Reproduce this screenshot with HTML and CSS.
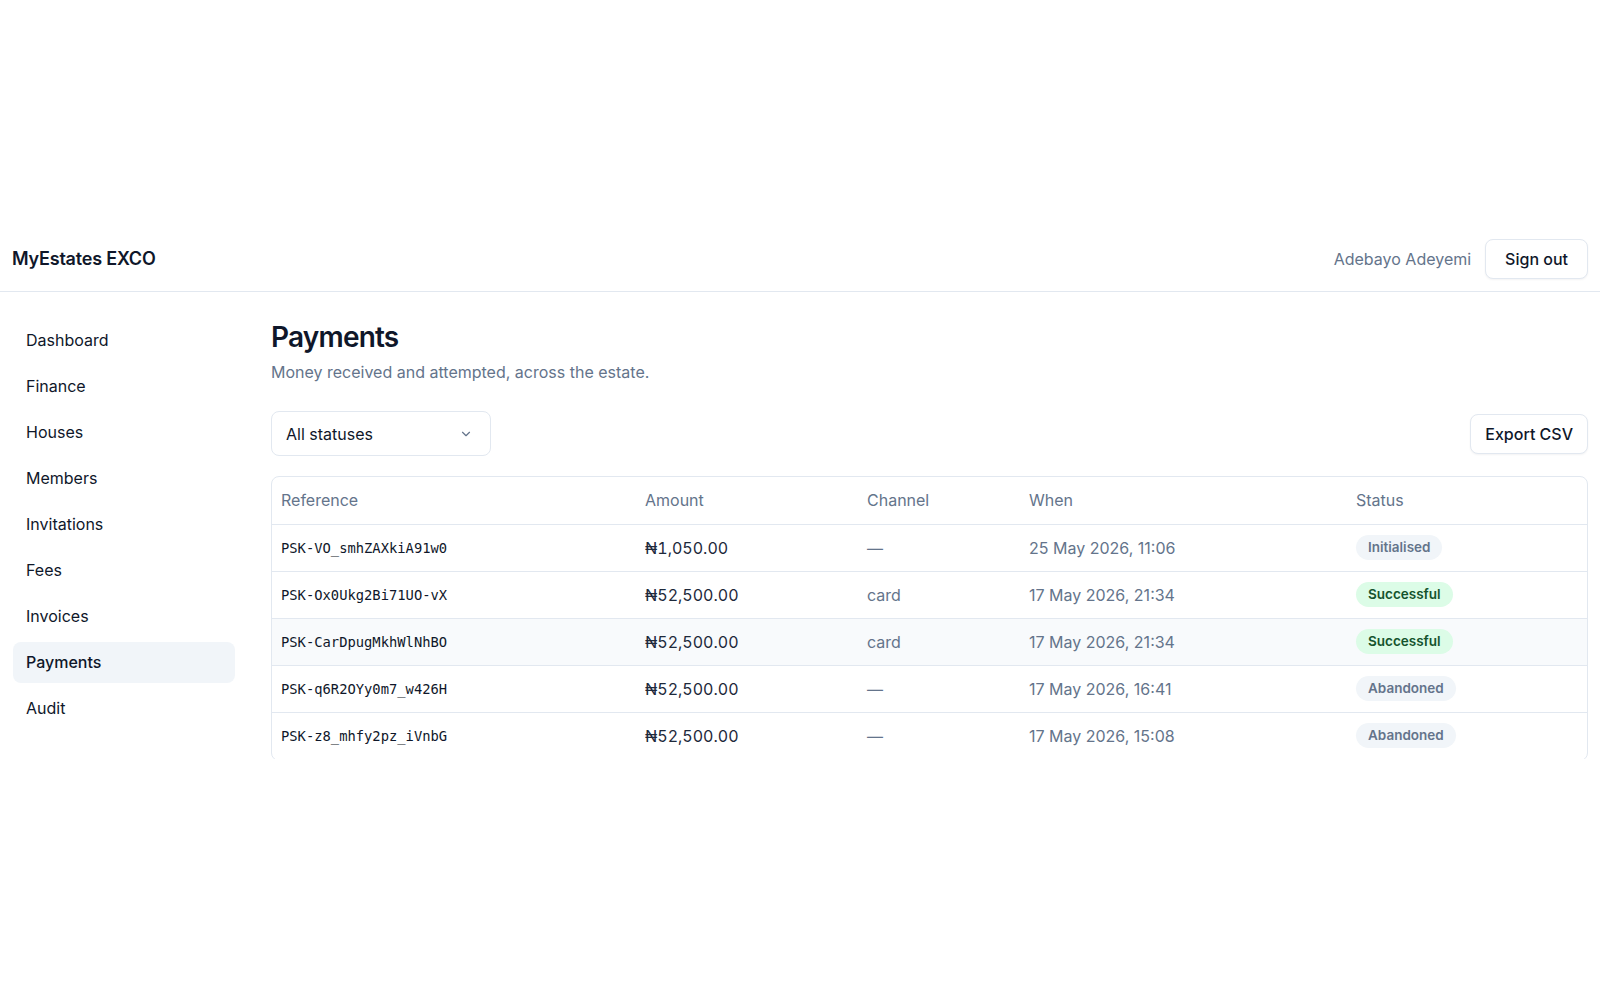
FILE: index.html
```html
<!DOCTYPE html>
<html lang="en">
  <head>
    <meta charset="UTF-8" />
    <meta name="viewport" content="width=device-width, initial-scale=1.0" />
    <title>Payments | MyEstates EXCO</title>
    <link rel="stylesheet" href="styles.css">
  </head>
  <body>
    <div class="app">
      <header class="topbar">
        <div class="brand">MyEstates EXCO</div>
        <div class="user">
          <span class="user-name">Adebayo Adeyemi</span>
          <button class="btn">Sign out</button>
        </div>
      </header>

      <div class="layout">
        <nav class="sidebar">
          <a class="nav-item" href="#">Dashboard</a>
          <a class="nav-item" href="#">Finance</a>
          <a class="nav-item" href="#">Houses</a>
          <a class="nav-item" href="#">Members</a>
          <a class="nav-item" href="#">Invitations</a>
          <a class="nav-item" href="#">Fees</a>
          <a class="nav-item" href="#">Invoices</a>
          <a class="nav-item active" href="#">Payments</a>
          <a class="nav-item" href="#">Audit</a>
        </nav>

        <main class="main">
          <h1>Payments</h1>
          <p class="subtitle">Money received and attempted, across the estate.</p>

          <div class="toolbar">
            <div class="select">
              <span>All statuses</span>
              <svg width="14" height="14" viewBox="0 0 24 24" fill="none" stroke="#64748b" stroke-width="2" stroke-linecap="round" stroke-linejoin="round"><path d="M6 9l6 6 6-6"/></svg>
            </div>
            <button class="btn btn-export">Export CSV</button>
          </div>

          <div class="table-wrap">
            <table>
              <thead>
                <tr>
                  <th class="col-ref">Reference</th>
                  <th class="col-amount">Amount</th>
                  <th class="col-channel">Channel</th>
                  <th class="col-when">When</th>
                  <th>Status</th>
                </tr>
              </thead>
              <tbody>
                <tr>
                  <td class="ref">PSK-VO_smhZAXkiA91w0</td>
                  <td class="amount">₦1,050.00</td>
                  <td class="muted">—</td>
                  <td class="muted">25 May 2026, 11:06</td>
                  <td><span class="badge">Initialised</span></td>
                </tr>
                <tr>
                  <td class="ref">PSK-Ox0Ukg2Bi71UO-vX</td>
                  <td class="amount">₦52,500.00</td>
                  <td class="muted">card</td>
                  <td class="muted">17 May 2026, 21:34</td>
                  <td><span class="badge badge-success">Successful</span></td>
                </tr>
                <tr class="hover">
                  <td class="ref">PSK-CarDpugMkhWlNhBO</td>
                  <td class="amount">₦52,500.00</td>
                  <td class="muted">card</td>
                  <td class="muted">17 May 2026, 21:34</td>
                  <td><span class="badge badge-success">Successful</span></td>
                </tr>
                <tr>
                  <td class="ref">PSK-q6R2OYy0m7_w426H</td>
                  <td class="amount">₦52,500.00</td>
                  <td class="muted">—</td>
                  <td class="muted">17 May 2026, 16:41</td>
                  <td><span class="badge">Abandoned</span></td>
                </tr>
                <tr>
                  <td class="ref">PSK-z8_mhfy2pz_iVnbG</td>
                  <td class="amount">₦52,500.00</td>
                  <td class="muted">—</td>
                  <td class="muted">17 May 2026, 15:08</td>
                  <td><span class="badge">Abandoned</span></td>
                </tr>
              </tbody>
            </table>
          </div>
        </main>
      </div>
    </div>
  </body>
</html>
```

FILE: styles.css
```css
* {
  margin: 0;
  padding: 0;
  box-sizing: border-box;
}
body {
  font-family: "Inter", "Noto Sans", sans-serif;
  font-size: 16px;
  color: #0f172a;
  background: #ffffff;
}


.app {
  margin-top: 230px;
  height: 529px;
  overflow: hidden;
}
.topbar {
  display: flex;
  justify-content: space-between;
  align-items: center;
  height: 62px;
  padding: 0 12px 4px 12px;
  border-bottom: 1px solid #e2e8f0;
}
.brand {
  font-size: 18px;
  font-weight: 600;
  letter-spacing: -0.2px;
}
.user {
  display: flex;
  align-items: center;
  gap: 14px;
}
.user-name {
  color: #64748b;
}
.btn {
  height: 40px;
  padding: 0 19px;
  font-family: inherit;
  font-size: 16px;
  font-weight: 500;
  color: #0f172a;
  background: white;
  border: 1px solid #e2e8f0;
  border-radius: 8px;
  box-shadow: 0 1px 2px rgba(15, 23, 42, 0.05);
  cursor: pointer;
}
.btn-export {
  padding: 0 14px;
}


.layout {
  display: grid;
  grid-template-columns: 222px 1fr;
  gap: 36px;
  padding: 28px 12px 0 13px;
}
.sidebar {
  display: flex;
  flex-direction: column;
  gap: 5px;
}
.nav-item {
  display: block;
  padding: 10px 13px;
  line-height: 21px;
  color: #0f172a;
  text-decoration: none;
  border-radius: 8px;
}
.nav-item.active {
  background: #f1f5f9;
  font-weight: 500;
}


.main h1 {
  font-size: 28px;
  line-height: 34px;
  font-weight: 600;
  letter-spacing: -0.8px;
}
.subtitle {
  margin-top: 6px;
  line-height: 24px;
  color: #64748b;
}
.toolbar {
  margin-top: 27px;
  display: flex;
  justify-content: space-between;
  align-items: center;
}
.select {
  width: 220px;
  height: 45px;
  display: flex;
  justify-content: space-between;
  align-items: center;
  padding: 0 17px 0 14px;
  border: 1px solid #e2e8f0;
  border-radius: 8px;
}


.table-wrap {
  margin-top: 20px;
  border: 1px solid #e2e8f0;
  border-radius: 8px;
  overflow: hidden;
}
table {
  width: 100%;
  border-collapse: collapse;
  table-layout: fixed;
}
th,
td {
  height: 47px;
  text-align: left;
  padding: 0 9px;
  vertical-align: middle;
  border-bottom: 1px solid #e2e8f0;
  white-space: nowrap;
}
th {
  font-weight: 400;
  color: #64748b;
}
.col-ref {
  width: 364px;
}
.col-amount {
  width: 222px;
}
.col-channel {
  width: 162px;
}
.col-when {
  width: 327px;
}
.ref {
  font-family: "DejaVu Sans Mono", "Liberation Mono", monospace;
  font-size: 13.8px;
}
.amount {
  color: #1e293b;
  font-variant-numeric: tabular-nums;
}
.muted {
  color: #64748b;
}
tr.hover td {
  background: #f8fafc;
}
.badge {
  display: inline-block;
  padding: 4px 12px;
  font-size: 13.5px;
  line-height: 17px;
  font-weight: 600;
  color: #64748b;
  background: #f1f5f9;
  border-radius: 999px;
}
.badge-success {
  color: #14532d;
  background: #dcfce7;
}
```
